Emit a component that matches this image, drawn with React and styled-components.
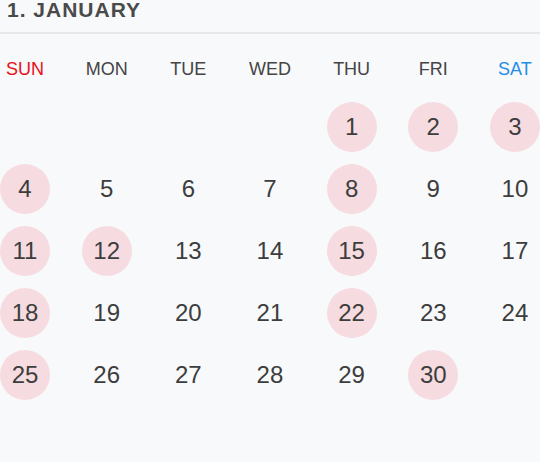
import React from "react";
import styled, { createGlobalStyle } from "styled-components";

const Global = createGlobalStyle`
  html, body { margin: 0; padding: 0; background: #f8f9fb; }
  body { font-family: "Liberation Sans", Arial, sans-serif; }
`;

const Page = styled.div`
  width: 540px;
  height: 462px;
  background: #f8f9fb;
  overflow: hidden;
`;

const Header = styled.div`
  height: 32px;
  border-bottom: 2px solid #e6e8eb;
  padding: 0 7px;
  box-sizing: content-box;
`;

const Title = styled.h1`
  margin: 0;
  font-size: 21px;
  line-height: 20px;
  font-weight: 700;
  letter-spacing: 1px;
  color: #4a4a4a;
`;

const Row = styled.div`
  display: flex;
  justify-content: space-between;
`;

const WeekRow = styled(Row)`
  margin-top: 25px;
  height: 21px;
  margin-bottom: 22px;
`;

const DayName = styled.div`
  width: 50px;
  display: flex;
  justify-content: center;
  font-size: 18px;
  line-height: 21px;
  white-space: nowrap;
  color: ${(p) => (p.$tone === "sun" ? "#e8101a" : p.$tone === "sat" ? "#1e8eea" : "#444")};
`;

const Weeks = styled.div`
  display: flex;
  flex-direction: column;
  gap: 12px;
`;

const Cell = styled.div`
  width: 50px;
  height: 50px;
  border-radius: 50%;
  display: flex;
  align-items: center;
  justify-content: center;
  font-size: 24px;
  color: #3d3d3d;
  background: ${(p) => (p.$marked ? "#f6dce0" : "transparent")};
`;

const names = [
  ["SUN", "sun"],
  ["MON"],
  ["TUE"],
  ["WED"],
  ["THU"],
  ["FRI"],
  ["SAT", "sat"],
];

const marked = new Set([1, 2, 3, 4, 8, 11, 12, 15, 18, 22, 25, 30]);

const weeks = [
  [null, null, null, null, 1, 2, 3],
  [4, 5, 6, 7, 8, 9, 10],
  [11, 12, 13, 14, 15, 16, 17],
  [18, 19, 20, 21, 22, 23, 24],
  [25, 26, 27, 28, 29, 30, null],
];

export default function App() {
  return (
    <Page>
      <Global />
      <Header>
        <Title>1. JANUARY</Title>
      </Header>
      <WeekRow>
        {names.map(([n, t]) => (
          <DayName key={n} $tone={t}>
            {n}
          </DayName>
        ))}
      </WeekRow>
      <Weeks>
        {weeks.map((w, i) => (
          <Row key={i}>
            {w.map((d, j) => (
              <Cell key={j} $marked={d && marked.has(d)}>
                {d}
              </Cell>
            ))}
          </Row>
        ))}
      </Weeks>
    </Page>
  );
}
